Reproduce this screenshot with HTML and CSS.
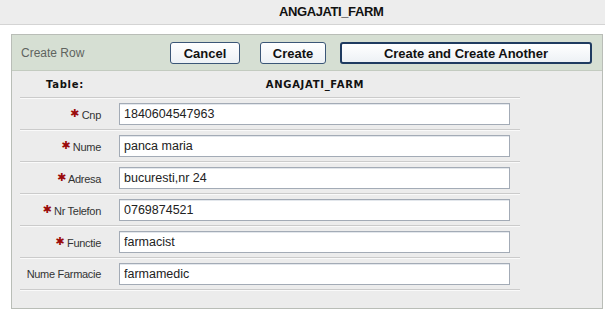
FILE: index.html
```html
<!DOCTYPE html>
<html lang="en">
<head>
    <meta charset="UTF-8">
    <title>ANGAJATI_FARM</title>
    <link rel="stylesheet" href="styles.css">
</head>
<body>
    <div class="page-title">ANGAJATI_FARM</div>

    <div class="region">
        <div class="region-header">
            <div class="region-title">Create Row</div>
            <div class="buttons">
                <button class="btn btn-cancel">Cancel</button>
                <button class="btn">Create</button>
                <button class="btn btn-default">Create and Create Another</button>
            </div>
        </div>

        <div class="form">
            <div class="form-head">
                <div class="head-label">Table:</div>
                <div class="head-value">ANGAJATI_FARM</div>
            </div>
            <div class="form-row">
                <label class="field-label"><span class="req">✱</span> Cnp</label>
                <div class="field"><input type="text" value="1840604547963"></div>
            </div>
            <div class="form-row">
                <label class="field-label"><span class="req">✱</span> Nume</label>
                <div class="field"><input type="text" value="panca maria"></div>
            </div>
            <div class="form-row">
                <label class="field-label"><span class="req">✱</span> Adresa</label>
                <div class="field"><input type="text" value="bucuresti,nr 24"></div>
            </div>
            <div class="form-row">
                <label class="field-label"><span class="req">✱</span> Nr Telefon</label>
                <div class="field"><input type="text" value="0769874521"></div>
            </div>
            <div class="form-row">
                <label class="field-label"><span class="req">✱</span> Functie</label>
                <div class="field"><input type="text" value="farmacist"></div>
            </div>
            <div class="form-row">
                <label class="field-label">Nume Farmacie</label>
                <div class="field"><input type="text" value="farmamedic"></div>
            </div>
        </div>
    </div>
</body>
</html>
```

FILE: styles.css
```css
body {
    margin: 0;
    background: #fff;
    font-family: "Liberation Sans", Arial, sans-serif;
    color: #222;
}
.page-title {
    height: 24px;
    line-height: 24px;
    background: #ededed;
    border-bottom: 1px solid #d4d4d4;
    padding-left: 279px;
    font-size: 13px;
    font-weight: bold;
    letter-spacing: -0.4px;
    color: #111;
}
.region {
    margin: 9px 2px 0 11px;
    height: 275px;
    box-sizing: border-box;
    background: #ececec;
    border: 1px solid #b9bdb7;
}
.region-header {
    display: flex;
    align-items: center;
    height: 35px;
    background: #d6dfd3;
    border-bottom: 1px solid #c3cbc0;
}
.region-title {
    width: 149px;
    padding-left: 9px;
    font-size: 12px;
    color: #5f645f;
}
.buttons {
    display: flex;
    gap: 14px;
    margin-top: 1px;
}
.btn {
    width: 66px;
    height: 22px;
    padding: 0;
    box-sizing: border-box;
    background: linear-gradient(#ffffff, #edf1f5);
    border: 1px solid #3b5677;
    border-radius: 3px;
    font-family: "Liberation Sans", Arial, sans-serif;
    font-size: 13px;
    font-weight: bold;
    color: #111;
}
.btn-cancel {
    width: 70px;
    margin-right: 6px;
}
.btn-default {
    width: 252px;
    border: 2px solid #1f3b60;
}
.form {
    width: 500px;
    margin-left: 8px;
}
.form-head,
.form-row {
    display: grid;
    grid-template-columns: 90px 410px;
    align-items: center;
    border-bottom: 1px solid #cbcbcb;
    box-shadow: 0 1px 0 #fafafa;
}
.form-head {
    height: 26px;
    font-family: "DejaVu Sans", Verdana, sans-serif;
    font-size: 10px;
    font-weight: bold;
    letter-spacing: 0.7px;
    color: #111;
    text-align: center;
}
.form-row {
    padding: 5px 0 4px;
}
.field-label {
    padding-right: 9px;
    text-align: right;
    font-size: 11px;
    letter-spacing: -0.3px;
    color: #333;
}
.req {
    color: #9b0a0a;
    font-family: "DejaVu Sans", sans-serif;
    font-size: 11px;
    vertical-align: 2px;
}
.field {
    padding-left: 9px;
}
.field input {
    width: 391px;
    height: 22px;
    box-sizing: border-box;
    padding: 0 4px;
    border: 1px solid #a3abb6;
    box-shadow: inset 0 1px 0 #e3e7ec;
    background: #fff;
    font-family: "Liberation Sans", Arial, sans-serif;
    font-size: 12.5px;
    color: #222;
}
```
